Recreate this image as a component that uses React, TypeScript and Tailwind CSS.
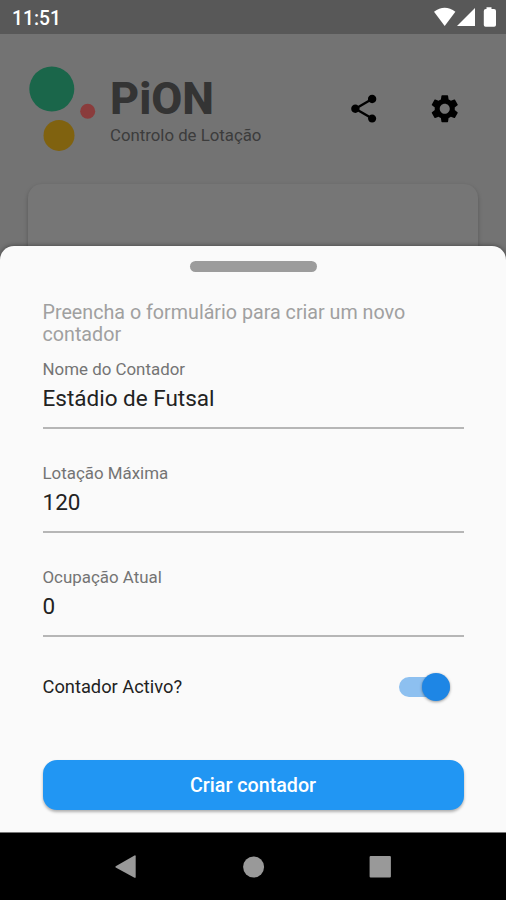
import React, { useState } from "react";
import { MdSettings, MdShare } from "react-icons/md";

type FieldProps = {
  label: string;
  value: string;
  onChange: (value: string) => void;
};

const StatusBar: React.FC = () => (
  <div className="flex h-[34px] shrink-0 items-center justify-between bg-[#585858] pl-3 pr-2.5 text-white">
    <span className="pt-[3px] text-[19.3px] leading-none font-medium">11:51</span>
    <svg className="h-[34px] w-[66px]" viewBox="0 0 66 34" fill="currentColor">
      <path d="M14.7 26 L4 11.7 Q14.7 3.8 25.4 11.7 Z" />
      <path d="M45 8 V26 H27 Z" />
      <path d="M56.5 7.2 H61.5 V9 H64 Q66 9 66 11 V25 Q66 26.8 64.2 26.8 H55.6 Q53.8 26.8 53.8 25 V11 Q53.8 9 55.8 9 H56.5 Z" />
    </svg>
  </div>
);

const Header: React.FC = () => (
  <header className="flex h-[150px] shrink-0 items-center">
    {/* Logo */}
    <svg className="ml-7 h-[90px] w-[70px]" viewBox="0 0 70 90">
      <circle cx="23.8" cy="25" r="22.5" fill="#1a664a" />
      <circle cx="59.7" cy="47.3" r="7.5" fill="#8a3c3c" />
      <circle cx="31" cy="71.4" r="15.5" fill="#80620f" />
    </svg>
    <div className="ml-3 w-[230px]">
      <h1 className="pt-0.5 text-[45px] leading-[45px] font-extrabold text-[#343434]">PiON</h1>
      <p className="mt-1 text-[16.8px] leading-5 whitespace-nowrap text-[#3c3c3c]">Controlo de Lotação</p>
    </div>
    <button aria-label="Partilhar" className="ml-[6.5px] text-black">
      <MdShare className="size-[33.5px]" />
    </button>
    <button aria-label="Definições" className="ml-[48px] text-black">
      <MdSettings className="size-[33.5px]" />
    </button>
  </header>
);

const Field: React.FC<FieldProps> = ({ label, value, onChange }) => (
  <label className="block h-[104px]">
    <span className="block text-[16.9px] leading-5 text-[#747474]">{label}</span>
    <input
      className="block h-[50px] w-full border-b-2 border-[#b6b6b6] bg-transparent pb-[10px] text-[22.5px] text-[#222] outline-none"
      value={value}
      onChange={(e) => onChange(e.target.value)}
    />
  </label>
);

const NavBar: React.FC = () => (
  <nav className="flex h-[67px] shrink-0 items-center justify-center bg-black">
    <svg className="h-6 w-[280px]" viewBox="0 0 280 24" fill="#999">
      <path d="M2.7 11.3 L21.5 0.4 Q22.7 0 22.7 1.2 V22 Q22.7 23.2 21.5 22.7 L2.7 12.6 Q2 12 2.7 11.3 Z" />
      <circle cx="140.6" cy="12" r="10.5" />
      <rect x="256.6" y="1" width="21.3" height="21.6" rx="1" />
    </svg>
  </nav>
);

export default function App() {
  const [name, setName] = useState("Estádio de Futsal");
  const [capacity, setCapacity] = useState("120");
  const [occupation, setOccupation] = useState("0");
  const [active, setActive] = useState(true);

  return (
    <div className="relative flex h-[900px] w-[506px] flex-col overflow-hidden bg-[#737373] font-['Roboto',sans-serif]">
      <StatusBar />
      <Header />
      <div className="mx-7 flex-1 rounded-[14px] bg-[#767676] shadow-[0_2px_4px_rgba(0,0,0,0.25)]" />

      {/* Bottom sheet */}
      <div className="absolute inset-x-0 bottom-0 flex h-[654px] flex-col">
        <div className="flex flex-1 flex-col rounded-t-[14px] border-b border-[#777] bg-[#fafafa] px-[42.5px] shadow-[0_0_5px_rgba(0,0,0,0.45)]">
          <div className="mx-auto mt-[14.5px] h-[11.5px] w-[127px] shrink-0 rounded-full bg-[#9c9c9c]" />
          <p className="mt-[29px] h-[58px] pt-px text-[19.7px] leading-[22px] text-[#a0a0a0]">
            Preencha o formulário para criar um novo contador
          </p>
          <Field label="Nome do Contador" value={name} onChange={setName} />
          <Field label="Lotação Máxima" value={capacity} onChange={setCapacity} />
          <Field label="Ocupação Atual" value={occupation} onChange={setOccupation} />

          <div className="flex h-8 items-center justify-between pr-[13.5px]">
            <span className="text-[18.3px] text-[#222]">Contador Activo?</span>
            <button
              role="switch"
              aria-checked={active}
              aria-label="Contador Activo?"
              onClick={() => setActive(!active)}
              className={`flex h-5 w-[51px] items-center rounded-full ${active ? "justify-end bg-[#8dc0f0]" : "bg-gray-400"}`}
            >
              <span className="size-[28.5px] rounded-full bg-[#1e86e5] shadow-[0_1px_3px_rgba(0,0,0,0.4)]" />
            </button>
          </div>

          <button className="mt-[56.5px] h-[50.5px] rounded-[14px] bg-[#2196f3] pt-0.5 text-[19.7px] font-medium text-white shadow-[0_2px_3px_rgba(0,0,0,0.3)]">
            Criar contador
          </button>
        </div>
        <NavBar />
      </div>
    </div>
  );
}
